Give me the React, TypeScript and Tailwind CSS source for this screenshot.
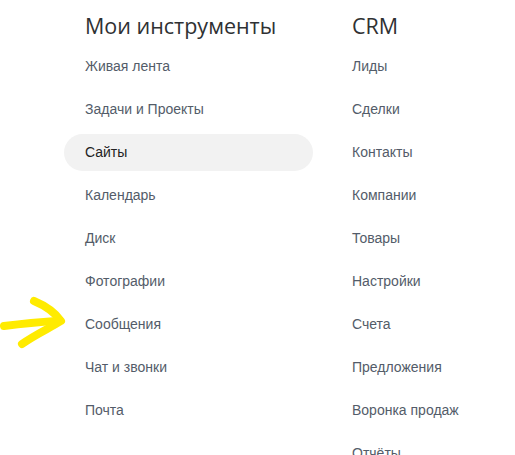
const myTools = [
  "Живая лента",
  "Задачи и Проекты",
  "Сайты",
  "Календарь",
  "Диск",
  "Фотографии",
  "Сообщения",
  "Чат и звонки",
  "Почта",
];

const crm = [
  "Лиды",
  "Сделки",
  "Контакты",
  "Компании",
  "Товары",
  "Настройки",
  "Счета",
  "Предложения",
  "Воронка продаж",
  "Отчёты",
];

function MenuColumn({ title, items, active }: { title: string; items: string[]; active?: string }) {
  return (
    <div className="w-[249px] shrink-0 flex flex-col whitespace-nowrap">
      <div className="h-[47px] pl-[21px] pt-[11px] text-[21.5px] leading-[28px] text-[#2f3133] font-['Open_Sans',sans-serif]">
        {title}
      </div>
      <div className="flex flex-col gap-[6px]">
        {items.map((item) => (
          <div
            key={item}
            className={
              item === active
                ? "h-[37px] flex items-center pl-[21px] rounded-full bg-[#f2f2f2] text-[#222]"
                : "h-[37px] flex items-center pl-[21px] text-[#535c69]"
            }
          >
            {item}
          </div>
        ))}
      </div>
    </div>
  );
}

export default function App() {
  return (
    <div className="relative w-[515px] h-[455px] overflow-hidden bg-white font-['Liberation_Sans',Arial,sans-serif] text-[14px]">
      <div className="flex gap-[18px] pl-[64px] pt-[1px]">
        <MenuColumn title="Мои инструменты" items={myTools} active="Сайты" />
        <MenuColumn title="CRM" items={crm} />
      </div>
      {/* yellow marker arrow */}
      <svg className="absolute left-0 top-[290px]" width="80" height="65" viewBox="0 0 80 65">
        <g fill="none" stroke="#ffeb00" strokeWidth="8" strokeLinecap="round" strokeLinejoin="round">
          <path d="M4 36 C20 34 40 32 56 31" />
          <path d="M34 11 C46 16 56 24 61 31 C50 38 36 44 22 54" />
        </g>
      </svg>
    </div>
  );
}
